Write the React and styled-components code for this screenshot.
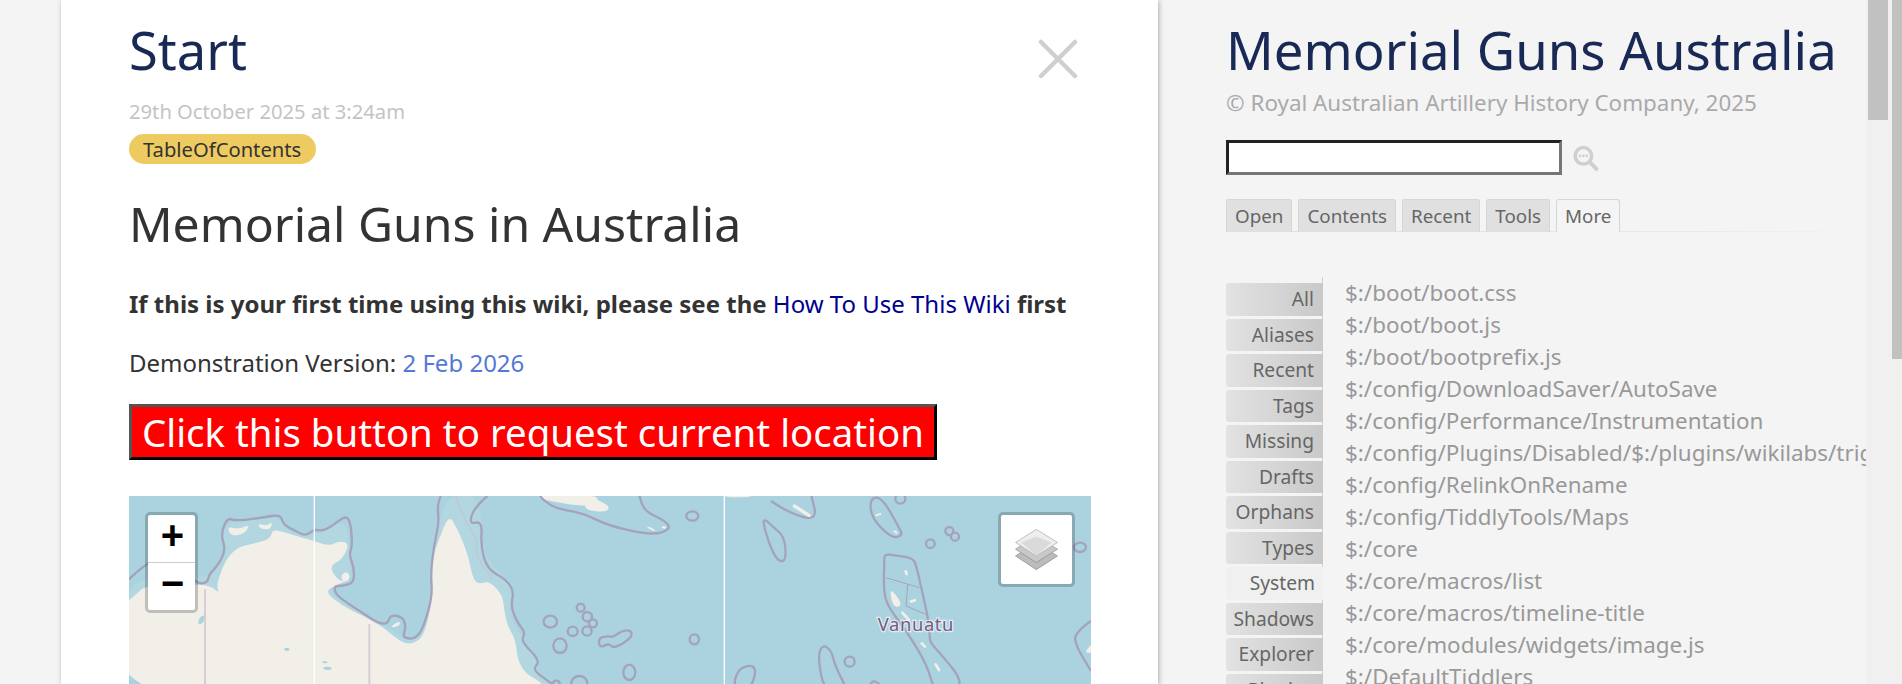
import React from 'react';
import styled, { createGlobalStyle } from 'styled-components';

const GlobalStyle = createGlobalStyle`
  html, body { margin: 0; height: 100%; overflow: hidden; background: #f4f4f4; }
  body { font-family: "Noto Sans", "Open Sans", sans-serif; color: #333; }
`;

const Page = styled.div`
  display: flex;
  height: 684px;
  overflow: hidden;
`;

/* Story river */
const River = styled.main`
  flex: 0 0 1097px;
  margin-left: 61px;
  height: 684px;
  overflow: hidden;
  background: #fff;
  box-shadow: 1px 1px 5px rgba(0, 0, 0, 0.3);
  padding: 15px 67px 0 68px;
  box-sizing: border-box;
`;

const TitleRow = styled.div`
  display: flex;
  justify-content: space-between;
  align-items: flex-start;
  padding-right: 13px;
`;

const TiddlerTitle = styled.h2`
  margin: 0;
  font-size: 52.5px;
  line-height: 70px;
  font-weight: 400;
  color: #182955;
`;

const CloseIcon = styled.svg`
  display: block;
  width: 40px;
  height: 40px;
  margin-top: 24px;
`;

const DateLine = styled.div`
  margin-top: 13px;
  font-size: 20.2px;
  line-height: 27px;
  color: #c4c4c4;
`;

const TagPill = styled.span`
  display: inline-block;
  margin-top: 9px;
  padding: 0 14.5px 0 14px;
  height: 30px;
  line-height: 30px;
  border-radius: 15px;
  background: #eecb60;
  font-size: 20.2px;
  color: #333;
`;

const Heading = styled.h1`
  margin: 26px 0 0;
  font-size: 48.1px;
  line-height: 68px;
  font-weight: 400;
  color: #333;
`;

const Para = styled.p`
  margin: ${p => p.$gap}px 0 0;
  font-size: 24px;
  line-height: 32px;
  font-weight: ${p => (p.$bold ? 700 : 400)};
  color: #333;
`;

const Link = styled.a`
  font-weight: 400;
  color: ${p => (p.$strong ? '#000090' : '#5778d8')};
`;

const RequestButton = styled.button`
  display: block;
  margin-top: 25px;
  width: 808px;
  height: 56px;
  padding: 0 10px;
  border: 3px solid;
  border-color: #555 #000 #000 #555;
  background: #f00;
  color: #fff;
  font-family: inherit;
  font-size: 38.4px;
  line-height: 48px;
  text-align: left;
  white-space: nowrap;
`;

const MapFrame = styled.div`
  position: relative;
  margin-top: 36px;
  height: 188px;
  overflow: hidden;
  background: #aad3df;
`;

const MapArt = styled.svg`
  display: block;
  width: 962px;
  height: 188px;
`;

const ZoomBox = styled.div`
  position: absolute;
  left: 16px;
  top: 16px;
  width: 53px;
  box-sizing: border-box;
  border: 3px solid rgba(0, 0, 0, 0.2);
  border-radius: 5px;
  background-clip: padding-box;
`;

const ZoomKey = styled.div`
  display: flex;
  align-items: center;
  justify-content: center;
  height: 47.5px;
  box-sizing: border-box;
  padding: 0 0 6px 2px;
  background: #fff;
  border-bottom: ${p => (p.$last ? 'none' : '1px solid #ccc')};
  border-radius: ${p => (p.$last ? '0 0 3px 3px' : '3px 3px 0 0')};
  font-family: "Liberation Sans", Arial, sans-serif;
  font-size: 40px;
  font-weight: 700;
  color: #000;
`;

const LayersBox = styled.div`
  position: absolute;
  right: 16px;
  top: 16px;
  width: 77px;
  height: 75px;
  box-sizing: border-box;
  display: flex;
  align-items: center;
  justify-content: center;
  border: 3px solid rgba(0, 0, 0, 0.2);
  border-radius: 5px;
  background: #fff;
  background-clip: padding-box;
`;

/* Sidebar */
const Sidebar = styled.aside`
  flex: 1;
  min-width: 0;
  display: flex;
  height: 684px;
`;

const SidebarBody = styled.div`
  flex: 1;
  min-width: 0;
  overflow: hidden;
  padding-left: 68px;
`;

const SiteTitle = styled.h1`
  margin: 19px 0 0;
  font-size: 52.7px;
  line-height: 62px;
  font-weight: 400;
  color: #182955;
  white-space: nowrap;
`;

const SiteSubtitle = styled.div`
  margin-top: 8px;
  font-size: 22.4px;
  line-height: 27px;
  color: #aaa;
`;

const SearchRow = styled.div`
  display: flex;
  align-items: center;
  gap: 11px;
  margin-top: 24px;
`;

const SearchInput = styled.input`
  width: 336px;
  height: 35px;
  box-sizing: border-box;
  border: 3px solid;
  border-color: #222 #767676 #767676 #222;
  background: #fff;
  padding: 0;
`;

const TabBar = styled.div`
  display: flex;
  gap: 6px;
  margin-top: 24px;
  height: 33px;
  border-bottom: 1px solid;
  border-image: linear-gradient(to right, #e0e0e0, #e8e8e8 70%, #f4f4f4) 1;
  box-sizing: border-box;
`;

const Tab = styled.div`
  height: 33px;
  box-sizing: border-box;
  padding: 0 8px;
  border: 1px solid #d6d6d6;
  border-bottom: none;
  border-radius: 3px 3px 0 0;
  background: ${p => (p.$active ? '#f4f4f4' : '#e0e0e0')};
  font-size: 18.8px;
  line-height: 33px;
  color: #666;
`;

const MoreBody = styled.div`
  display: flex;
  margin-top: 45px;
`;

const SideTabs = styled.div`
  flex: 0 0 97px;
  display: flex;
  flex-direction: column;
  gap: 3px;
  padding-top: 6px;
  border-right: 1px solid #d0d0d0;
  box-sizing: border-box;
`;

const SideTab = styled.div`
  height: 32.5px;
  box-sizing: border-box;
  padding-right: ${p => (p.$active ? 8 : 9)}px;
  margin-right: -1px;
  border-radius: 3px 0 0 3px;
  background: ${p =>
    p.$active ? '#f0f0f0' : 'linear-gradient(to right, #e2e2e2, #c9c9c9)'};
  font-size: 19.2px;
  line-height: 31px;
  text-align: right;
  color: #666;
`;

const TiddlerList = styled.div`
  flex: 1;
  min-width: 0;
  padding-left: 22px;
  overflow: hidden;
`;

const ListItem = styled.div`
  font-size: 22.4px;
  line-height: 32px;
  color: #999;
  white-space: nowrap;
`;

const ScrollTrack = styled.div`
  flex: 0 0 ${p => p.$width}px;
  background: #f0f0f0;
  padding-left: ${p => p.$inset}px;
  box-sizing: border-box;
`;

const ScrollThumb = styled.div`
  width: ${p => p.$width}px;
  height: ${p => p.$height}px;
  background: #c1c1c1;
`;

const SIDE_TABS = ['All', 'Aliases', 'Recent', 'Tags', 'Missing', 'Drafts', 'Orphans', 'Types', 'System', 'Shadows', 'Explorer', 'Plugins'];

const TIDDLERS = [
  '$:/boot/boot.css',
  '$:/boot/boot.js',
  '$:/boot/bootprefix.js',
  '$:/config/DownloadSaver/AutoSave',
  '$:/config/Performance/Instrumentation',
  '$:/config/Plugins/Disabled/$:/plugins/wikilabs/trigger',
  '$:/config/RelinkOnRename',
  '$:/config/TiddlyTools/Maps',
  '$:/core',
  '$:/core/macros/list',
  '$:/core/macros/timeline-title',
  '$:/core/modules/widgets/image.js',
  '$:/DefaultTiddlers',
];

// rounds a list of "x y" points into a path, so the coasts don't look like polygons
function smooth(list, closed) {
  const pts = list.split(',').map(s => s.trim().split(/\s+/).map(Number));
  const mid = (a, b) => `${(a[0] + b[0]) / 2} ${(a[1] + b[1]) / 2}`;
  if (closed) {
    let d = `M${mid(pts[pts.length - 1], pts[0])}`;
    pts.forEach((p, i) => {
      d += ` Q${p[0]} ${p[1]} ${mid(p, pts[(i + 1) % pts.length])}`;
    });
    return d + ' Z';
  }
  let d = `M${pts[0][0]} ${pts[0][1]}`;
  for (let i = 1; i < pts.length - 1; i++) {
    d += ` Q${pts[i][0]} ${pts[i][1]} ${mid(pts[i], pts[i + 1])}`;
  }
  const end = pts[pts.length - 1];
  return d + ` L${end[0]} ${end[1]}`;
}

const SEA = '#aad3df';
const LAND = '#f2efe9';
const SHORE = '#a5a3bc';

const RINGS = [
  [1264, 377, 20, 18], [1355, 335, 12, 12], [1375, 362, 14, 14], [1392, 382, 12, 12],
  [1374, 405, 14, 14], [1331, 406, 15, 14], [1293, 449, 20, 22], [1696, 430, 14, 15],
  [1501, 529, 18, 23], [1351, 562, 24, 22], [1690, 60, 18, 14], [1282, 562, 10, 8],
  [2314, 8, 15, 15], [2461, 105, 12, 12], [2478, 122, 12, 12], [2404, 143, 13, 13],
  [2853, 154, 18, 14], [2162, 497, 15, 15],
];

const ISLANDS = [
  '1408 425, 1412 456, 1440 442, 1450 456, 1480 445, 1510 420, 1505 402, 1478 404, 1452 424, 1440 420',
  '1812 580, 1825 520, 1870 505, 1882 530, 1862 580',
  '1900 75, 1912 72, 1930 92, 1966 120, 1972 192, 1950 198, 1926 160',
  '2222 8, 2258 2, 2313 100, 2320 118, 2290 128, 2228 68',
  '2266 200, 2266 174, 2296 178, 2352 186, 2362 210, 2378 280, 2398 370, 2402 420, 2404 440, 2440 480, 2496 548, 2486 590, 2416 590, 2396 510, 2336 410, 2290 350, 2268 310, 2264 260',
  '2066 480, 2081 445, 2108 465, 2118 510, 2160 590, 2086 590',
  '2216 580, 2232 550, 2258 570',
];

const COAST_WEST = '0 250, 50 200, 120 180, 200 262, 235 262, 240 235, 270 205, 290 160, 275 115, 295 65, 320 75, 400 65, 455 55, 462 85, 500 105, 530 120, 555 100, 580 105, 610 90, 650 58, 665 80, 670 150, 660 175, 675 215, 675 260, 640 270, 615 270, 620 295, 660 325, 700 350, 745 380, 775 385, 785 355, 825 365, 830 400, 820 425, 860 430, 885 390, 910 300, 905 230, 915 150, 930 80, 925 30, 935 0';
const COAST_EAST = '1075 0, 1035 35, 1020 85, 1060 75, 1055 150, 1075 220, 1130 250, 1155 285, 1145 330, 1165 380, 1190 410, 1175 435, 1235 495, 1210 520, 1250 550, 1270 564';
const AUSTRALIA = '-20 330, 25 292, 50 268, 200 264, 245 270, 272 292, 262 270, 280 215, 300 178, 330 152, 380 142, 425 128, 430 100, 470 110, 520 125, 556 135, 600 150, 630 135, 662 142, 640 190, 610 205, 606 225, 634 258, 660 250, 630 265, 585 285, 640 330, 700 358, 760 392, 790 418, 830 446, 870 436, 890 400, 905 330, 912 290, 905 240, 915 170, 930 130, 960 55, 985 100, 1005 145, 1020 190, 1030 240, 1045 265, 1080 255, 1120 295, 1125 340, 1135 390, 1160 430, 1165 490, 1190 535, 1250 564, 1260 640, -20 640';
const REEF = '-20 295, 50 240, 200 245, 240 240, 270 200, 285 160, 280 115, 300 75, 400 70, 450 62, 470 100, 530 120, 580 110, 650 70, 660 140, 665 215, 665 255, 615 265, 600 290, 700 350, 760 385, 780 395, 830 435, 870 425, 895 380, 905 240, 915 160, 935 60, 960 0, 1030 -10, 1060 60, 1060 170, 1110 230, 1160 270, 1135 340, 1175 420, 1230 490, 1220 520, 1290 600, -20 640';
const NEW_GUINEA = '1228 -5, 1260 35, 1360 50, 1440 90, 1570 118, 1625 100, 1610 75, 1545 45, 1530 -5';
const SOLOMONS = '1926 15, 1976 50, 2066 75, 2046 -5';

function MapDrawing() {
  return (
    <MapArt viewBox="0 0 2886 564" aria-hidden="true">
      <defs>
        <filter id="soft" x="-2%" y="-2%" width="104%" height="104%">
          <feGaussianBlur stdDeviation="2" />
        </filter>
      </defs>
      <rect width="2886" height="564" fill={SEA} />
      <g filter="url(#soft)">
        <path d={smooth(REEF, true)} fill="#b2d7e0" />
        <path d={smooth(AUSTRALIA, true)} fill={LAND} />
        <path d={smooth('298 92, 330 100, 362 85, 350 110, 320 120, 300 112', true)} fill={LAND} />
        <path d={smooth('385 82, 415 90, 430 75, 425 100, 395 100', true)} fill={LAND} />
        <path d={smooth('636 240, 650 225, 664 240, 655 258, 640 255', true)} fill={LAND} />
        <path d={smooth('465 455, 482 455, 482 465, 466 465', true)} fill={SEA} />
        <path d={smooth('578 496, 596 496, 596 502, 580 502', true)} fill={SEA} />
        <path d={smooth('582 512, 610 513, 606 522, 584 522', true)} fill={SEA} />
        <path d={smooth('212 362, 230 356, 222 382, 206 386', true)} fill={SEA} />
        <path d={smooth('785 392, 810 375, 815 385, 795 395', true)} fill={LAND} />

        {/* state borders */}
        <path d="M228 280 L228 564 M721 385 L721 564" fill="none" stroke="#d8ccd6" strokeWidth="6" />

        {/* maritime line round the coast */}
        <path d={smooth(COAST_WEST)} fill="none" stroke={SHORE} strokeWidth="7" />
        <path d={smooth(COAST_EAST)} fill="none" stroke={SHORE} strokeWidth="7" />
        <path d={smooth('980 0, 1000 60, 1045 130, 1040 180, 1090 250')} fill="none" stroke="#c3c6d4" strokeWidth="4" />

        {/* New Guinea */}
        <path d={smooth('1215 -5, 1245 12, 1360 32, 1410 20, 1400 -5', true)} fill={LAND} />
        <path d={smooth('1380 0, 1445 30, 1430 50, 1360 40', true)} fill={LAND} />
        <path d={smooth(NEW_GUINEA)} fill="none" stroke={SHORE} strokeWidth="7" />
        <path d={smooth('1552 92, 1580 106, 1568 98', true)} fill={LAND} stroke={LAND} strokeWidth="4" />
        <path d={smooth('1600 90, 1615 95, 1600 97', true)} fill={LAND} stroke={LAND} strokeWidth="3" />

        {/* Solomon Islands */}
        <path d={smooth(SOLOMONS)} fill="none" stroke={SHORE} strokeWidth="7" />
        <path d="M1996 30 L2040 58" fill="none" stroke={LAND} strokeWidth="10" strokeLinecap="round" />
        <path d={smooth('1786 -5, 1880 -5, 1860 4, 1790 4', true)} fill={LAND} />

        {RINGS.map(([cx, cy, rx, ry]) => (
          <ellipse key={`${cx}-${cy}`} cx={cx} cy={cy} rx={rx} ry={ry} fill="none" stroke={SHORE} strokeWidth="7" />
        ))}
        {ISLANDS.map(list => (
          <path key={list} d={smooth(list, true)} fill="none" stroke={SHORE} strokeWidth="7" />
        ))}
        <path d={smooth('2886 375, 2836 410, 2841 450, 2886 525')} fill="none" stroke={SHORE} strokeWidth="7" />

        {/* Vanuatu land and borders */}
        <path d="M2271 245 L2371 275 M2336 265 L2331 330 L2391 355" fill="none" stroke={SHORE} strokeWidth="3" />
        <path d={smooth('2282 280, 2300 295, 2318 325, 2305 335, 2290 325', true)} fill={LAND} />
        <path d="M2320 350 L2340 372 M2378 442 L2388 452 M2420 505 L2430 522 M2346 316 L2358 313 M2330 226 L2333 234" stroke={LAND} strokeWidth="8" strokeLinecap="round" fill="none" />
        <path d="M2242 58 L2254 54 M2296 106 L2303 110" stroke={LAND} strokeWidth="6" strokeLinecap="round" fill="none" />
        <path d={smooth('2866 470, 2890 440, 2890 472', true)} fill={LAND} />

        {/* tile seams */}
        <path d="M556 0 L556 564 M1786 0 L1786 564" stroke="#fff" strokeWidth="4" />
      </g>
      <text
        x="2246"
        y="405"
        fontFamily="'Noto Sans', sans-serif"
        fontSize="55"
        fill="#7a5a85"
        stroke="#fff"
        strokeOpacity="0.6"
        strokeWidth="8"
        paintOrder="stroke"
        letterSpacing="2"
      >
        Vanuatu
      </text>
    </MapArt>
  );
}

function LayersIcon() {
  return (
    <svg width="43" height="41" viewBox="0 0 127 122" aria-hidden="true">
      <path d="M1 80 L63 42 L126 80 L63 121 Z" fill="#bcbcbc" stroke="#8a8a8a" strokeWidth="2" />
      <path d="M1 60 L63 22 L126 60 L63 100 Z" fill="#c8c8c8" stroke="#8a8a8a" strokeWidth="2" />
      <path d="M1 40 L63 1 L126 40 L63 80 Z" fill="#eeeeee" stroke="#a8a8a8" strokeWidth="2" />
      <path d="M18 40 L63 22 L108 40 L63 79 Z" fill="#dadada" />
    </svg>
  );
}

function SearchIcon() {
  return (
    <svg width="26" height="26" viewBox="0 0 30 30" aria-hidden="true">
      <circle cx="12" cy="12.5" r="9.5" fill="none" stroke="#cfcfcf" strokeWidth="4" />
      <path d="M19 19.5 L27 27.5" stroke="#cfcfcf" strokeWidth="4.5" strokeLinecap="round" />
      <circle cx="8" cy="12.5" r="1.5" fill="#cfcfcf" />
      <circle cx="12" cy="12.5" r="1.5" fill="#cfcfcf" />
      <circle cx="16" cy="12.5" r="1.5" fill="#cfcfcf" />
    </svg>
  );
}

function App() {
  return (
    <Page>
      <GlobalStyle />
      <River>
        <TitleRow>
          <TiddlerTitle>Start</TiddlerTitle>
          <CloseIcon viewBox="0 0 40 40" aria-hidden="true">
            <path d="M3 3 L37 37 M37 3 L3 37" stroke="#cfcfcf" strokeWidth="4.5" strokeLinecap="round" />
          </CloseIcon>
        </TitleRow>
        <DateLine>29th October 2025 at 3:24am</DateLine>
        <TagPill>TableOfContents</TagPill>
        <Heading>Memorial Guns in Australia</Heading>
        <Para $bold $gap={30}>
          If this is your first time using this wiki, please see the <Link $strong>How To Use This Wiki</Link> first
        </Para>
        <Para $gap={27}>
          Demonstration Version: <Link>2 Feb 2026</Link>
        </Para>
        <RequestButton>Click this button to request current location</RequestButton>
        <MapFrame>
          <MapDrawing />
          <ZoomBox>
            <ZoomKey>+</ZoomKey>
            <ZoomKey $last>−</ZoomKey>
          </ZoomBox>
          <LayersBox>
            <LayersIcon />
          </LayersBox>
        </MapFrame>
      </River>
      <Sidebar>
        <SidebarBody>
          <SiteTitle>Memorial Guns Australia</SiteTitle>
          <SiteSubtitle>© Royal Australian Artillery History Company, 2025</SiteSubtitle>
          <SearchRow>
            <SearchInput />
            <SearchIcon />
          </SearchRow>
          <TabBar>
            <Tab>Open</Tab>
            <Tab>Contents</Tab>
            <Tab>Recent</Tab>
            <Tab>Tools</Tab>
            <Tab $active>More</Tab>
          </TabBar>
          <MoreBody>
            <SideTabs>
              {SIDE_TABS.map(name => (
                <SideTab key={name} $active={name === 'System'}>{name}</SideTab>
              ))}
            </SideTabs>
            <TiddlerList>
              {TIDDLERS.map(name => (
                <ListItem key={name}>{name}</ListItem>
              ))}
            </TiddlerList>
          </MoreBody>
        </SidebarBody>
        <ScrollTrack $width={26} $inset={2}>
          <ScrollThumb $width={20} $height={120} />
        </ScrollTrack>
        <ScrollTrack $width={10} $inset={0}>
          <ScrollThumb $width={10} $height={359} />
        </ScrollTrack>
      </Sidebar>
    </Page>
  );
}

export default App;
